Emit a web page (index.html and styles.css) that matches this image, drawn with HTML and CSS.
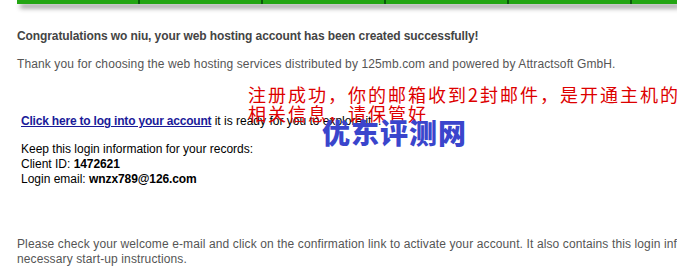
FILE: index.html
```html
<!DOCTYPE html>
<html>
<head>
<meta charset="utf-8">
<link rel="stylesheet" href="styles.css">
</head>
<body>
<div class="topbar">
  <div class="seg first"></div>
  <div class="seg"></div>
  <div class="seg"></div>
  <div class="seg"></div>
  <div class="seg"></div>
  <div class="seg last"></div>
</div>
<div class="content">
  <h1 class="title">Congratulations wo niu, your web hosting account has been created successfully!</h1>
  <p class="thanks">Thank you for choosing the web hosting services distributed by 125mb.com and powered by Attractsoft GmbH.</p>
  <div class="login">
    <p class="linkline"><a href="#" class="loginlink">Click here to log into your account</a> it is ready for you to explore it...</p>
    <p class="records">Keep this login information for your records:<br>Client ID: <b class="val">1472621</b><br>Login email: <b class="val">wnzx789@126.com</b></p>
  </div>
  <p class="check">Please check your welcome e-mail and click on the confirmation link to activate your account. It also contains this login information and necessary start-up instructions.</p>
</div>
<div class="note">注册成功，你的邮箱收到2封邮件，是开通主机的相关信息，请保管好</div>
<div class="mark">优东评测网</div>
</body>
</html>
```
FILE: styles.css
```css
html, body {
  margin: 0;
  padding: 0;
  background: #fff;
  overflow: hidden;
}
body {
  width: 677px;
  height: 266px;
  position: relative;
  font-family: "Liberation Sans", Arial, sans-serif;
  font-size: 12px;
  line-height: 15px;
}
.topbar {
  display: flex;
  margin-left: 17px;
  height: 4px;
  box-shadow: 3px 4px 5px rgba(0, 0, 0, 0.45);
}
.seg {
  flex: 0 0 123px;
  height: 4px;
  background: #23a513;
  border-left: 2px solid #0b5a0b;
  box-sizing: border-box;
}
.seg.first {
  flex-basis: 121px;
  border-left: none;
}
.seg.last {
  flex: 1 1 auto;
}
.content {
  padding-left: 17px;
  width: 780px;
}
.title {
  margin: 25px 0 0;
  font-size: 12px;
  line-height: 15px;
  font-weight: bold;
  letter-spacing: -0.1px;
  color: #444;
}
.thanks {
  margin: 13px 0 0;
  color: #555;
  letter-spacing: 0.11px;
}
.login {
  padding-left: 4px;
  color: #000;
}
.linkline {
  margin: 42px 0 0;
}
.loginlink {
  color: #1a1a99;
  font-weight: bold;
  letter-spacing: -0.2px;
  text-decoration: underline;
}
.val {
  letter-spacing: -0.1px;
}
.records {
  margin: 13px 0 0;
}
.check {
  margin: 50px 0 0;
  color: #555;
  line-height: 15px;
  letter-spacing: 0.12px;
  width: 760px;
}
.note {
  position: absolute;
  left: 248px;
  top: 85px;
  width: 436px;
  font-family: "Noto Sans CJK SC", sans-serif;
  font-size: 18px;
  line-height: 19px;
  letter-spacing: 2px;
  color: #d00;
}
.mark {
  position: absolute;
  left: 322px;
  top: 114px;
  font-family: "Noto Sans CJK SC", sans-serif;
  font-weight: 900;
  font-size: 28px;
  line-height: 36px;
  letter-spacing: 1px;
  color: #3a45cc;
}
```
